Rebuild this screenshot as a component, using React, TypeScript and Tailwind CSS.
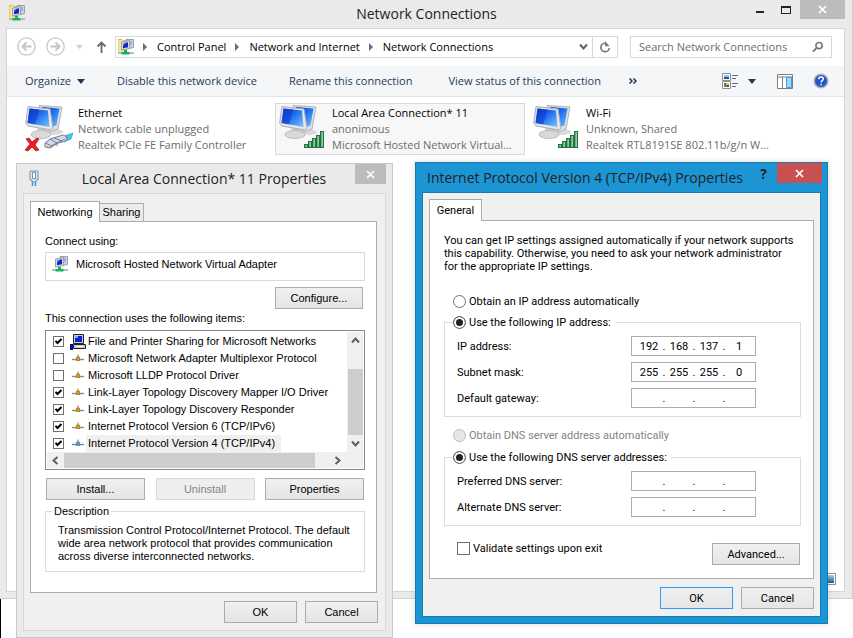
import React from "react";

const BTN =
  "h-[22px] border border-[#acacac] bg-gradient-to-b from-[#f0f0f0] to-[#e5e5e5] text-black disabled:border-[#d9d9d9] disabled:from-[#efefef] disabled:to-[#efefef] disabled:text-[#838383]";

function AdapterIcon({ folder = false }: { folder?: boolean }) {
  return (
    <svg width="16" height="16" viewBox="0 0 16 16" className="shrink-0" aria-hidden="true">
      {folder && <path d="M0 .5h4l1 1h3v12H0z" fill="#f6e68c" stroke="#d8bd55" strokeWidth="1" />}
      <path d="M8 0.5h7.500v8l-4 1z" fill="#cfd3da" stroke="#9a9fa8" />
      <path d="M9 2h5v4H9z" fill="#8fb4ee" />
      <path d="M3.500 3l8-1.500v8l-8 1.500z" fill="#d9dce2" stroke="#9a9fa8" />
      <path d="M5 4.200l5-0.9v5L5 9.200z" fill="#1226c4" />
      <path d="M5 4.200l3-.5-3 3z" fill="#6f94f4" />
      <path d="M0 14h16" stroke="#b9bcc2" strokeWidth="2" />
      <path d="M6 11h3v2h2.500v2.500H3.500V13H6z" fill="#12b35c" />
    </svg>
  );
}

function Monitors({ kind }: { kind: "cable" | "signal" }) {
  return (
    <svg width="50" height="50" viewBox="0 0 50 50" className="shrink-0" aria-hidden="true">
      <defs>
        <linearGradient id={"scr" + kind} x1="0" y1="0" x2="1" y2="1">
          <stop offset="0" stopColor="#0a35c8" />
          <stop offset=".45" stopColor="#1f6df0" />
          <stop offset="1" stopColor="#7cc4ff" />
        </linearGradient>
        <linearGradient id={"bar" + kind} x1="0" y1="0" x2="1" y2="0">
          <stop offset="0" stopColor="#3f9a63" />
          <stop offset="1" stopColor="#b6e8c0" />
        </linearGradient>
      </defs>
      <ellipse cx="29" cy="28" rx="9" ry="3" fill="#dadada" />
      <path d="M14 1.500l23 1.500-4 22-8 3z" fill="#dfe1e4" stroke="#b0b3b8" />
      <path d="M17 3l17.500 1.500-3 17-8 2z" fill={`url(#scr${kind})`} />
      <path d="M12 24l10 1 1 5h-9z" fill="#c9c9c9" />
      <ellipse cx="16" cy="30.500" rx="10" ry="4" fill="#d9d9d9" stroke="#bdbdbd" />
      <path d="M3 2.500l22 2.500 3 19-2 2L3 22 .7 19z" fill="#e6e7e9" stroke="#a9acb1" />
      <path d="M4.500 4.500l18.500 2 1.500 16.500L2.500 19z" fill={`url(#scr${kind})`} />
      <path d="M4.500 4.500l10 1.100L10 20.400 2.500 19z" fill="#0b39c9" opacity=".55" />
      {kind === "signal" ? (
        <g fill={`url(#bar${kind})`} stroke="#22713f">
          <rect x="25.500" y="40.500" width="3" height="3" />
          <rect x="29.500" y="37.500" width="3" height="6" />
          <rect x="33.500" y="34.500" width="3" height="9" />
          <rect x="37.500" y="31.500" width="3" height="12" />
          <rect x="41.500" y="27.500" width="3" height="16" />
        </g>
      ) : (
        <g>
          <path d="M39 32l9-3-2 6-7 3z" fill="#4fc0ea" stroke="#2a9fd0" strokeWidth=".6" />
          <path d="M20 39l5-4 13-4 4 2-1 4-8 2-8 5-5-1z" fill="#d4dbe6" stroke="#6f7e98" />
          <path d="M25 35l7 4M29 34l8 3M21 39l5 3 14-7M26 42v2M32 39v3" stroke="#6f7e98" fill="none" />
          <path d="M21 41h3v2h-3z" fill="#d5cf9a" />
          <path d="M1 35l3-1 3 4 5-4 2 1-4 6 4 5-3 1-4-4-4 4-3-1 5-6z" fill="#ec1c24" stroke="#b40d13" strokeWidth=".7" />
        </g>
      )}
    </svg>
  );
}

function Connection(props: { kind: "cable" | "signal"; lines: string[]; selected?: boolean }) {
  return (
    <li
      className={
        "flex h-13 w-[250px] shrink-0 items-start border pl-[3px] " +
        (props.selected ? "border-[#dadada] bg-[#f7f7f7]" : "border-transparent")
      }
    >
      <Monitors kind={props.kind} />
      <div className="flex flex-col pt-px pl-[3px] whitespace-nowrap text-[#6d6d6d]">
        <span className="text-black">{props.lines[0]}</span>
        <span>{props.lines[1]}</span>
        <span>{props.lines[2]}</span>
      </div>
    </li>
  );
}

function Cross({ size = 9 }: { size?: number }) {
  return (
    <svg width={size} height={size} viewBox="0 0 9 9" aria-hidden="true">
      <path d="M1 1l7 7M8 1l-7 7" stroke="#fff" strokeWidth="1.700" />
    </svg>
  );
}

function Crumb({ label }: { label: string }) {
  return (
    <>
      <svg width="5" height="8" viewBox="0 0 5 8" aria-hidden="true">
        <path d="M0 0l4 4-4 4z" fill="#6a6a6a" />
      </svg>
      <a href="#" className="text-black">{label}</a>
    </>
  );
}

function Chevron({ d }: { d: string }) {
  return (
    <svg width="9" height="9" viewBox="0 0 9 9" aria-hidden="true">
      <path d={d} fill="none" stroke="#606060" strokeWidth="2" />
    </svg>
  );
}

function MainWindow() {
  return (
    <section className="flex min-h-[599px] flex-col border-r border-b border-[#cfcfcf] bg-[#eaeaea] pr-[7px] pb-1.5 pl-1.5 font-['Open_Sans',sans-serif] text-[11px] leading-4 text-[#1e395b]">
      <header className="flex h-7 items-start">
        <span className="pt-[5px] pl-[3px]"><AdapterIcon folder /></span>
        <h1 className="flex-1 pt-px pl-20 text-center text-[14px] leading-[26px] text-[#222]">Network Connections</h1>
        <div className="flex">
          <button aria-label="Minimize" className="flex h-5 w-6 items-center justify-center pt-1">
            <span className="h-0.5 w-2 bg-[#222]" />
          </button>
          <button aria-label="Maximize" className="flex h-[19px] w-7 items-center justify-center">
            <span className="h-2 w-2.5 border border-t-2 border-[#222]" />
          </button>
          <button aria-label="Close" className="flex h-[19px] w-[45px] items-center justify-center bg-[#bcbcbc]">
            <Cross />
          </button>
        </div>
      </header>
      <div className="flex flex-1 flex-col border border-[#d4d4d4] bg-white">
        <nav className="flex h-[37px] items-center pr-3 pb-0.5 pl-2.5">
          <button aria-label="Back" className="mr-2.5">
            <svg width="19" height="19" viewBox="0 0 19 19" fill="none" stroke="#c6c6c6">
              <circle cx="9.500" cy="9.500" r="8.700" strokeWidth="1.300" />
              <path d="M14.500 9.500H5.500M9.500 5.500l-4 4 4 4" strokeWidth="2" />
            </svg>
          </button>
          <button aria-label="Forward">
            <svg width="19" height="19" viewBox="0 0 19 19" fill="none" stroke="#c6c6c6">
              <circle cx="9.500" cy="9.500" r="8.700" strokeWidth="1.300" />
              <path d="M4.500 9.500h9M9.500 5.500l4 4-4 4" strokeWidth="2" />
            </svg>
          </button>
          <button aria-label="Recent" className="pr-3 pl-[11px]">
            <svg width="8" height="4" viewBox="0 0 8 4"><path d="M0 0h7L3.500 4z" fill="#cfcfcf" /></svg>
          </button>
          <button aria-label="Up" className="mr-2">
            <svg width="11" height="12" viewBox="0 0 11 12" fill="none" stroke="#6a6a6a" strokeWidth="1.800">
              <path d="M5.500 12V2M1.500 5.500l4-4 4 4" />
            </svg>
          </button>
          <div className="flex h-[22px] flex-1 items-center border border-[#d9d9d9]">
            <div className="flex flex-1 items-center gap-[9px] pl-0.5">
              <AdapterIcon folder />
              <Crumb label="Control Panel" />
              <Crumb label="Network and Internet" />
              <Crumb label="Network Connections" />
            </div>
            <button aria-label="Previous locations" className="px-1"><Chevron d="M1 2.500l3.500 4 3.500-4" /></button>
            <button aria-label="Refresh" className="flex h-full w-[25px] items-center justify-center border-l border-[#d9d9d9]">
              <svg width="12" height="12" viewBox="0 0 12 12">
                <path d="M6.500 2.300A4.200 4.200 0 1 0 10.300 7" fill="none" stroke="#777" strokeWidth="1.700" />
                <path d="M6 0v5.200h4.500z" fill="#777" />
              </svg>
            </button>
          </div>
          <label className="ml-3 flex h-[22px] w-[202px] items-center border border-[#d9d9d9] px-2">
            <input aria-label="Search Network Connections" placeholder="Search Network Connections" className="w-full min-w-0 outline-none placeholder:text-[#6d6d6d]" />
            <svg width="12" height="12" viewBox="0 0 12 12" fill="none" stroke="#777">
              <circle cx="7.500" cy="4.500" r="3.300" strokeWidth="1.800" />
              <path d="M5 7l-4 4" strokeWidth="2" />
            </svg>
          </label>
        </nav>
        <div className="flex h-[31px] items-center border-b border-[#e3e6e9] bg-[#f5f6f7] pr-[15px] pl-[18px]">
          <button className="mr-8 flex items-center gap-1.5">
            Organize
            <svg width="8" height="5" viewBox="0 0 8 5"><path d="M0 0h8L4 5z" fill="#1e395b" /></svg>
          </button>
          <button className="mr-8">Disable this network device</button>
          <button className="mr-9">Rename this connection</button>
          <button className="mr-7">View status of this connection</button>
          <button aria-label="More commands">
            <svg width="8" height="6" viewBox="0 0 8 6" fill="none" stroke="#1e395b" strokeWidth="1.500"><path d="M.5 .5L3 3 .5 5.500M4.500 .5L7 3 4.500 5.500" /></svg>
          </button>
          <div className="ml-auto flex items-center">
            <button aria-label="Change your view" className="flex items-center gap-2.5">
              <svg width="16" height="16" viewBox="0 0 16 16">
                <path d="M.5 .5h8v7h-8zM.5 8.500h8v7h-8z" fill="#fff" stroke="#8a919c" />
                <path d="M2 2h5v2H2z" fill="#8cc8f0" /><path d="M2 4h5v2H2z" fill="#23548c" />
                <path d="M2 10h2v2H2z" fill="#d33" /><path d="M4 10h3v2H4z" fill="#e9c431" /><path d="M2 12h3v2H2z" fill="#3a9a3d" /><path d="M5 12h2v2H5z" fill="#2856c8" />
                <path d="M10 2.500h6M10 5.500h4M10 10.500h6M10 13.500h4" stroke="#5c6c82" />
              </svg>
              <svg width="8" height="5" viewBox="0 0 8 5"><path d="M0 0h8L4 5z" fill="#1e395b" /></svg>
            </button>
            <button aria-label="Show the preview pane" className="ml-[21px]">
              <svg width="16" height="15" viewBox="0 0 16 15">
                <path d="M.5 .5h15v14H.5zM.5 3h15M5.500 3v12" fill="#fff" stroke="#7d7d7d" />
                <path d="M9.500 3.500h5v10h-5z" fill="#a7d6fb" stroke="#3d9be9" />
              </svg>
            </button>
            <button aria-label="Help" className="ml-5">
              <svg width="16" height="16" viewBox="0 0 16 16">
                <circle cx="8" cy="8" r="6.800" fill="#2456c8" stroke="#a9b0be" strokeWidth="1.500" />
                <path d="M5.800 6.200C5.800 3.200 10.300 3.400 10.300 6c0 1.500-2.200 1.600-2.200 3.300M8.100 10.800v1.500" fill="none" stroke="#fff" strokeWidth="1.500" />
              </svg>
            </button>
          </div>
        </div>
        <ul className="flex gap-1 overflow-hidden pt-1.5 pl-3.5">
          <Connection kind="cable" lines={["Ethernet", "Network cable unplugged", "Realtek PCIe FE Family Controller"]} />
          <Connection kind="signal" selected lines={["Local Area Connection* 11", "anonimous", "Microsoft Hosted Network Virtual..."]} />
          <Connection kind="signal" lines={["Wi-Fi", "Unknown, Shared", "Realtek RTL8191SE 802.11b/g/n W..."]} />
        </ul>
        <footer className="mt-auto flex justify-end pr-2 pb-1.5">
          <button aria-label="Large icons" className="flex h-3 w-3.5 items-center justify-center border border-[#7d97b0] bg-white">
            <span className="h-2 w-2.5 bg-gradient-to-b from-[#9fdcf5] to-[#245f80]" />
          </button>
        </footer>
      </div>
    </section>
  );
}

function CheckBox({ checked, label, large }: { checked?: boolean; label?: string; large?: boolean }) {
  return (
    <span className={"grid shrink-0 place-items-center " + (large ? "size-[13px]" : "size-[11px]")}>
      <input
        type="checkbox"
        aria-label={label}
        defaultChecked={checked}
        className="peer col-start-1 row-start-1 size-full appearance-none border border-[#707070] bg-white"
      />
      <svg width="7" height="7" viewBox="0 0 7 7" className="pointer-events-none invisible col-start-1 row-start-1 peer-checked:visible">
        <path d="M.5 2.800l2 2.200L6.500 1" fill="none" stroke="#000" strokeWidth="2" />
      </svg>
    </span>
  );
}

function ProtocolIcon({ active }: { active?: boolean }) {
  return (
    <svg width="16" height="16" viewBox="0 0 16 16" className="shrink-0" aria-hidden="true">
      <path d="M2 8.500h12" stroke={active ? "#4a8fd0" : "#8c8c8c"} strokeWidth="1.400" />
      <path d="M8 3.500v3" stroke="#777" />
      <path d="M6.500 6h3v2l.5 1.500H6L6.500 8z" fill={active ? "#5e9cc4" : "#d99a1c"} stroke={active ? "#3d7aa8" : "#8a6a20"} strokeWidth=".6" />
    </svg>
  );
}

function ComputerIcon() {
  return (
    <svg width="16" height="16" viewBox="0 0 16 16" className="shrink-0" aria-hidden="true">
      <path d="M3.500 .5h10v9h-10z" fill="#d0d0d0" stroke="#222" />
      <path d="M5 2h7v6H5z" fill="#0a1fd8" />
      <path d="M5 2h3v2H5z" fill="#7f9dff" />
      <path d="M3.500 10.500h12v4h-12z" fill="#c8c8c8" stroke="#222" />
      <path d="M0 10h3v6H0z" fill="#0a0a9c" />
      <path d="M6 12.500h7" stroke="#fff" />
    </svg>
  );
}

const items: { text: string; on: boolean; kind?: "pc" | "active" }[] = [
  { text: "File and Printer Sharing for Microsoft Networks", on: true, kind: "pc" },
  { text: "Microsoft Network Adapter Multiplexor Protocol", on: false },
  { text: "Microsoft LLDP Protocol Driver", on: false },
  { text: "Link-Layer Topology Discovery Mapper I/O Driver", on: true },
  { text: "Link-Layer Topology Discovery Responder", on: true },
  { text: "Internet Protocol Version 6 (TCP/IPv6)", on: true },
  { text: "Internet Protocol Version 4 (TCP/IPv4)", on: true, kind: "active" },
];

function ItemList() {
  return (
    <div className="mt-[5px] border border-[#828790] p-px">
      <div className="flex">
        <ul className="min-w-0 flex-1 pt-px pl-1.5">
          {items.map((it) => (
            <li key={it.text} className="flex h-[17px] items-center">
              <CheckBox checked={it.on} label={it.text} />
              <span className="ml-1.5 flex">
                {it.kind === "pc" ? <ComputerIcon /> : <ProtocolIcon active={it.kind === "active"} />}
              </span>
              <span className={"px-0.5 leading-[17px] whitespace-nowrap " + (it.kind === "active" ? "bg-[#f0f0f0] pr-1.5" : "")}>
                {it.text}
              </span>
            </li>
          ))}
        </ul>
        <div className="flex w-4 flex-col items-center bg-[#f0f0f0]">
          <button aria-label="Scroll up" className="flex h-[17px] items-center"><Chevron d="M1 6.500l3.500-4 3.500 4" /></button>
          <span className="mt-5 h-[66px] w-[15px] bg-[#cdcdcd]" />
          <button aria-label="Scroll down" className="flex h-[17px] items-center"><Chevron d="M1 2.500l3.500 4 3.500-4" /></button>
        </div>
      </div>
      <div className="flex h-4 items-center bg-[#f0f0f0] pr-[21px]">
        <button aria-label="Scroll left" className="flex w-[17px] justify-center"><Chevron d="M6.500 1l-4 3.500 4 3.500" /></button>
        <span className="h-[15px] w-[251px] bg-[#cdcdcd]" />
        <button aria-label="Scroll right" className="ml-auto flex"><Chevron d="M2.500 1l4 3.500-4 3.500" /></button>
      </div>
    </div>
  );
}

function AdapterDialog() {
  return (
    <section className="absolute top-[163px] left-4 w-[377px] border border-[#c8c8c8] bg-[#eaeaea] px-1.5 pb-1.5 font-['Liberation_Sans',Arial,sans-serif] text-[11px] leading-[13px] text-black">
      <header className="flex h-[29px] items-start font-['Open_Sans',sans-serif]">
        <svg width="10" height="16" viewBox="0 0 10 16" className="mt-1.5 ml-1.5 shrink-0" aria-hidden="true">
          <path d="M1 1h8v9H7v2H3v-2H1z" fill="#dce6ee" stroke="#7890a4" />
          <path d="M3.500 2.500h3v6h-3z" fill="#fff" stroke="#7890a4" />
          <path d="M3.500 12v4M6.500 12v4" stroke="#2aa5dd" strokeWidth="1.500" />
        </svg>
        <h2 className="flex-1 pt-[3px] pr-1 pl-[18px] text-center text-[14px] leading-6 text-[#222]">Local Area Connection* 11 Properties</h2>
        <button aria-label="Close" className="flex h-5 w-[31px] items-center justify-center bg-[#bcbcbc]"><Cross /></button>
      </header>
      <div className="border border-[#d9d9d9] bg-[#f0f0f0] px-1.5 pt-[7px] pb-[7px]">
        <div className="flex items-end" role="tablist">
          <button role="tab" aria-selected="true" className="-mb-px h-[21px] w-[70px] border border-b-0 border-[#acacac] bg-white">Networking</button>
          <button role="tab" aria-selected="false" className="h-[18px] w-11 border border-b-0 border-l-0 border-[#acacac] bg-[#ececec]">Sharing</button>
        </div>
        <div className="mr-0.5 border border-[#acacac] bg-white pt-3 pr-[11px] pb-5 pl-3.5">
          <p className="pt-px">Connect using:</p>
          <div className="mt-1 flex h-[29px] items-start gap-2 border border-[#d9d9d9] pt-[3px] pl-1.5">
            <AdapterIcon />
            <span className="pt-0.5">Microsoft Hosted Network Virtual Adapter</span>
          </div>
          <div className="flex justify-end pt-1.5 pr-0.5">
            <button className={BTN + " w-[88px]"}>Configure...</button>
          </div>
          <p className="mt-[3px]">This connection uses the following items:</p>
          <ItemList />
          <div className="mt-2 flex justify-between px-px">
            <button className={BTN + " w-[99px]"}>Install...</button>
            <button disabled className={BTN + " w-[99px]"}>Uninstall</button>
            <button className={BTN + " w-[99px]"}>Properties</button>
          </div>
          <fieldset className="mt-[5px] border border-[#dcdcdc] px-3 pt-1.5 pb-2">
            <legend className="-ml-1.5 px-0.5">Description</legend>
            <p className="whitespace-nowrap">
              Transmission Control Protocol/Internet Protocol. The default<br />
              wide area network protocol that provides communication<br />
              across diverse interconnected networks.
            </p>
          </fieldset>
        </div>
        <div className="mt-2 flex justify-end gap-2 pr-px">
          <button className={BTN + " w-[73px]"}>OK</button>
          <button className={BTN + " w-[73px]"}>Cancel</button>
        </div>
      </div>
    </section>
  );
}

function Radio(props: { name: string; label: string; checked?: boolean; disabled?: boolean }) {
  return (
    <label className={"flex h-4 w-fit items-center gap-[3px] bg-white pr-1 " + (props.disabled ? "text-[#838383]" : "")}>
      <input
        type="radio"
        name={props.name}
        defaultChecked={props.checked}
        disabled={props.disabled}
        className="size-[13px] appearance-none rounded-full border border-[#707070] bg-white checked:bg-[#222] checked:shadow-[inset_0_0_0_2px_white] disabled:border-[#bcbcbc] disabled:bg-[#e6e6e6]"
      />
      {props.label}
    </label>
  );
}

function AddressRow({ label, octets }: { label: string; octets: string[] }) {
  return (
    <div role="group" aria-label={label} className="flex items-center justify-between">
      <span>{label}</span>
      <div className="flex h-5 w-[125px] items-center border border-[#abadb3] bg-white pl-1">
        {octets.map((o, i) => (
          <React.Fragment key={i}>
            {i > 0 && <span className="w-1 text-center">.</span>}
            <input aria-label={label + " part " + (i + 1)} defaultValue={o} className="w-[26px] text-center outline-none" />
          </React.Fragment>
        ))}
      </div>
    </div>
  );
}

const blank = ["", "", "", ""];

function Ipv4Dialog() {
  return (
    <section className="absolute top-[162px] left-[415px] w-[413px] border border-[#187bb0] bg-[#1c95d4] px-1.5 pb-1.5 font-[Roboto,sans-serif] text-[11px] leading-[13px] text-black shadow-[0_0_6px_rgba(0,0,0,0.15)]">
      <header className="-mr-px flex h-[29px] items-start font-['Open_Sans',sans-serif]">
        <h2 className="flex-1 pt-[3px] pl-[5px] text-[14px] leading-6 whitespace-nowrap text-[#222]">Internet Protocol Version 4 (TCP/IPv4) Properties</h2>
        <button aria-label="Help" className="w-[27px] text-[14px] leading-[22px] font-bold text-[#222]">?</button>
        <button aria-label="Close" className="flex h-5 w-[45px] items-center justify-center bg-[#c75050]"><Cross /></button>
      </header>
      <div className="border border-[#187bb0] bg-[#f0f0f0] px-1.5 pt-1.5 pb-[7px]">
        <div className="flex" role="tablist">
          <button role="tab" aria-selected="true" className="z-10 -mb-px h-[22px] w-[53px] border border-b-0 border-[#acacac] bg-white">General</button>
        </div>
        <div className="border border-[#acacac] bg-white py-[13px] pr-3 pl-3.5">
          <p className="whitespace-nowrap">
            You can get IP settings assigned automatically if your network supports<br />
            this capability. Otherwise, you need to ask your network administrator<br />
            for the appropriate IP settings.
          </p>
          <div className="mt-5 pl-[9px]">
            <Radio name="ip" label="Obtain an IP address automatically" />
          </div>
          <fieldset className="mt-[5px] flex flex-col gap-1.5 border border-[#dcdcdc] pt-1.5 pr-11 pb-2 pl-3">
            <legend className="-ml-1">
              <Radio name="ip" label="Use the following IP address:" checked />
            </legend>
            <AddressRow label="IP address:" octets={["192", "168", "137", "1"]} />
            <AddressRow label="Subnet mask:" octets={["255", "255", "255", "0"]} />
            <AddressRow label="Default gateway:" octets={blank} />
          </fieldset>
          <div className="mt-2.5 pl-[9px]">
            <Radio name="dns" label="Obtain DNS server address automatically" disabled />
          </div>
          <fieldset className="mt-1.5 flex flex-col gap-1.5 border border-[#dcdcdc] pt-1.5 pr-11 pb-2 pl-3">
            <legend className="-ml-1">
              <Radio name="dns" label="Use the following DNS server addresses:" checked />
            </legend>
            <AddressRow label="Preferred DNS server:" octets={blank} />
            <AddressRow label="Alternate DNS server:" octets={blank} />
          </fieldset>
          <div className="mt-4 flex items-start justify-between pr-px pl-[13px]">
            <label className="flex items-center gap-[3px]">
              <CheckBox large />
              Validate settings upon exit
            </label>
            <button className={BTN + " mt-px w-[88px]"}>Advanced...</button>
          </div>
        </div>
        <div className="mt-2 flex justify-end gap-2">
          <button className="h-[22px] w-[73px] border border-[#3399ff] bg-gradient-to-b from-[#f0f0f0] to-[#e5e5e5]">OK</button>
          <button className={BTN + " w-[73px]"}>Cancel</button>
        </div>
      </div>
    </section>
  );
}

export default function App() {
  return (
    <main className="relative min-h-screen overflow-hidden bg-white">
      <MainWindow />
      <div className="h-[39px] border-l border-black" />
      <AdapterDialog />
      <Ipv4Dialog />
    </main>
  );
}
